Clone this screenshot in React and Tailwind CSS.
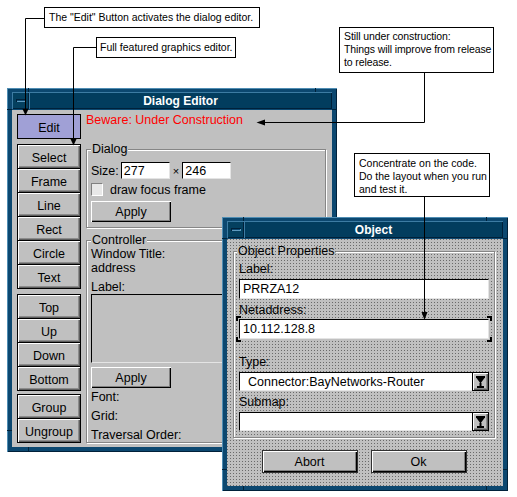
import React from "react";

const ui = "font-['Liberation_Sans',Arial,Helvetica,sans-serif]";
const raised =
  "bg-[#c0c0c0] shadow-[inset_1px_1px_0_#ffffff,inset_-1px_-1px_0_#5e5e5e,inset_-2px_-2px_0_#8c8c8c]";
const dotted =
  "bg-[#c0c0c0] bg-[image:linear-gradient(90deg,#c0c0c0_2px,transparent_2px),linear-gradient(#c0c0c0_2px,#6a6a6a_2px)] bg-[length:3px_3px] bg-fixed";
const groove = "border border-[#868686] shadow-[inset_1px_1px_0_#ffffff,1px_1px_0_#ffffff]";

function Notches() {
  // little resize-handle marks cut into the window frame
  return (
    <>
      <div className="absolute left-[21px] top-0 w-px h-[4px] bg-[#00223a]" />
      <div className="absolute right-[21px] top-0 w-px h-[4px] bg-[#00223a]" />
      <div className="absolute left-[21px] bottom-0 w-px h-[5px] bg-[#00223a]" />
      <div className="absolute right-[21px] bottom-0 w-px h-[5px] bg-[#00223a]" />
      <div className="absolute left-0 top-[21px] w-[5px] h-px bg-[#00223a]" />
      <div className="absolute right-0 top-[21px] w-[5px] h-px bg-[#00223a]" />
      <div className="absolute left-0 bottom-[21px] w-[5px] h-px bg-[#00223a]" />
      <div className="absolute right-0 bottom-[21px] w-[5px] h-px bg-[#00223a]" />
    </>
  );
}

function WindowFrame({ title, className, children }) {
  return (
    <div
      className={`absolute flex flex-col bg-[#0c4870] px-[5px] pt-[4px] pb-[5px] shadow-[inset_1px_1px_0_#4f8db3,inset_-1px_-1px_0_#00213a] ${className}`}
    >
      <Notches />
      <div className="flex h-[17px] shrink-0 mb-px">
        <div className="w-[17px] flex items-center justify-center bg-[#04405f] shadow-[inset_1px_1px_0_#3d7ca3,inset_-1px_-1px_0_#00213a]">
          <div className="w-[10px] h-[3px] bg-[#0c4870] shadow-[inset_1px_1px_0_#00213a,inset_-1px_-1px_0_#5f9bc0]" />
        </div>
        <div className="flex-1 flex items-center justify-center bg-[#023d5e] shadow-[inset_1px_1px_0_#3d7ca3,inset_-1px_-1px_0_#00213a] text-white font-bold text-[12px]">
          {title}
        </div>
      </div>
      {children}
    </div>
  );
}

function ToolGroup({ items, className }) {
  return (
    <div className={`flex flex-col gap-px bg-black border border-black ${className}`}>
      {items.map((item) => (
        <div key={item} className={`h-[23px] pt-[2px] flex items-center justify-center ${raised}`}>
          {item}
        </div>
      ))}
    </div>
  );
}

function PushButton({ label, className }) {
  return (
    <div
      className={`flex items-center justify-center pt-px bg-[#c0c0c0] shadow-[inset_1px_1px_0_#ffffff,inset_-1px_-1px_0_#000000,inset_-2px_-2px_0_#808080] ${className}`}
    >
      {label}
    </div>
  );
}

function Field({ value, className }) {
  return (
    <div
      className={`bg-white border border-black border-r-[#e4e4e4] border-b-[#e4e4e4] flex items-center ${className}`}
    >
      {value}
    </div>
  );
}

function ComboArrow() {
  return (
    <svg width="9" height="12" viewBox="0 0 9 12">
      <rect x="0" y="0" width="9" height="2" fill="#000" />
      <polygon points="0.5,2 8.5,2 4.5,7.5" fill="#000" />
      <rect x="3.5" y="7" width="2" height="3" fill="#000" />
      <rect x="1" y="10" width="7" height="2" fill="#000" />
    </svg>
  );
}

function Combo({ value }) {
  return (
    <div className="flex h-[19px] mt-[3px]">
      <div className="flex-1 bg-white border border-black border-r-0 border-b-[#e4e4e4] flex items-center pl-[8px]">
        {value}
      </div>
      <div className={`w-[17px] flex items-center justify-center border border-black ${raised}`}>
        <ComboArrow />
      </div>
    </div>
  );
}

function DialogEditor() {
  return (
    <WindowFrame title="Dialog Editor" className="left-[7px] top-[88px] w-[330px] h-[364px]">
      <div className="flex-1 bg-[#c0c0c0] flex gap-[5px] pl-[5px] pt-[4px] text-[12.5px] leading-[14px] overflow-hidden">
        <div className="w-[64px] shrink-0 flex flex-col">
          <div className="h-[25px] pt-[2px] bg-[#a0a0d6] border border-black flex items-center justify-center">
            Edit
          </div>
          <ToolGroup className="mt-[5px]" items={["Select", "Frame", "Line", "Rect", "Circle", "Text"]} />
          <ToolGroup className="mt-[5px]" items={["Top", "Up", "Down", "Bottom"]} />
          <ToolGroup className="mt-[3px]" items={["Group", "Ungroup"]} />
        </div>

        <div className="w-[240px] flex flex-col">
          <div className="text-[#ff0000] -mt-px">Beware: Under Construction</div>

          <fieldset className={`mt-[15px] pl-[4px] pb-[5px] ${groove}`}>
            <legend className="px-px bg-[#c0c0c0]">Dialog</legend>
            <div className="flex items-center h-[17px] mt-[6px]">
              <span>Size:</span>
              <Field value="277" className="ml-[2px] w-[49px] h-[17px] pl-[2px]" />
              <span className="px-[3px] text-[11px]">×</span>
              <Field value="246" className="w-[49px] h-[17px] pl-[2px]" />
            </div>
            <div className="flex items-center h-[13px] mt-[4px]">
              <div className="w-[12px] h-[13px] bg-[#e8e8e8] border border-[#808080] border-r-white border-b-white" />
              <span className="ml-[7px]">draw focus frame</span>
            </div>
            <PushButton label="Apply" className="mt-[5px] w-[80px] h-[21px]" />
          </fieldset>

          <fieldset className={`mt-[5px] pl-[4px] pr-[5px] ${groove}`}>
            <legend className="px-px bg-[#c0c0c0]">Controller</legend>
            <div>Window Title:</div>
            <div>address</div>
            <div className="mt-[5px]">Label:</div>
            <div className="h-[69px] bg-[#c0c0c0] border border-black border-r-[#e4e4e4] border-b-[#e4e4e4]" />
            <PushButton label="Apply" className="mt-[4px] w-[80px] h-[21px]" />
            <div className="mt-[2px]">Font:</div>
            <div className="mt-[5px]">Grid:</div>
            <div className="mt-[5px]">Traversal Order:</div>
          </fieldset>
        </div>
      </div>
    </WindowFrame>
  );
}

function ObjectWindow() {
  return (
    <WindowFrame title="Object" className="left-[222px] top-[217px] w-[286px] h-[274px]">
      <div className={`flex-1 flex flex-col pl-[6px] pr-[8px] pt-[5px] text-[12.5px] leading-[14px] ${dotted}`}>
        <fieldset className={`px-[5px] pt-[4px] pb-[6px] ${groove}`}>
          <legend className={`-ml-[2px] px-px ${dotted}`}>Object Properties</legend>
          <div>Label:</div>
          <Field value="PRRZA12" className="mt-[3px] h-[20px] pl-[3px]" />
          <div className="mt-[4px]">Netaddress:</div>
          <div className="relative mt-[2px]">
            <Field value="10.112.128.8" className="h-[20px] pl-[3px]" />
            <span className="absolute -left-[3px] -top-[3px] w-[5px] h-[5px] border-l-2 border-t-2 border-black" />
            <span className="absolute -right-[3px] -top-[3px] w-[5px] h-[5px] border-r-2 border-t-2 border-black" />
            <span className="absolute -left-[3px] -bottom-[3px] w-[5px] h-[5px] border-l-2 border-b-2 border-black" />
            <span className="absolute -right-[3px] -bottom-[3px] w-[5px] h-[5px] border-r-2 border-b-2 border-black" />
          </div>
          <div className="mt-[16px]">Type:</div>
          <Combo value="Connector:BayNetworks-Router" />
          <div className="mt-[4px]">Submap:</div>
          <Combo value="" />
        </fieldset>
        <div className="flex justify-center gap-[13px] mt-[12px]">
          <PushButton label="Abort" className="w-[96px] h-[23px] border border-[#303030]" />
          <PushButton label="Ok" className="w-[96px] h-[23px] border border-[#303030]" />
        </div>
      </div>
    </WindowFrame>
  );
}

function Note({ className, children }) {
  return (
    <div className={`absolute bg-white border border-black text-[10.5px] leading-[13px] whitespace-nowrap ${className}`}>
      {children}
    </div>
  );
}

function Arrows() {
  return (
    <svg className="absolute inset-0 pointer-events-none" width="517" height="497">
      <g stroke="#000" strokeWidth="1" fill="none">
        <polyline points="44,18.5 25.5,18.5 25.5,110" />
        <polyline points="96,47.5 73.5,47.5 73.5,140" />
        <polyline points="424.5,73 424.5,122.5 263,122.5" />
        <polyline points="424.5,197 424.5,313" />
      </g>
      <g fill="#000">
        <polygon points="22.5,109 28.5,109 25.5,115.5" />
        <polygon points="70.5,139 76.5,139 73.5,145.5" />
        <polygon points="256.5,122.5 265,119.5 265,125.5" />
        <polygon points="421.5,312 427.5,312 424.5,320" />
      </g>
    </svg>
  );
}

export default function App() {
  return (
    <div className={`relative w-[517px] h-[497px] bg-white overflow-hidden text-black ${ui}`}>
      <DialogEditor />
      <ObjectWindow />

      <Note className="left-[44px] top-[7px] w-[216px] h-[21px] pl-[4px] flex items-center">
        The "Edit" Button activates the dialog editor.
      </Note>
      <Note className="left-[96px] top-[37px] w-[140px] h-[21px] pl-[3px] flex items-center">
        Full featured graphics editor.
      </Note>
      <Note className="left-[339px] top-[27px] w-[155px] h-[46px] pl-[4px] pt-[2px] tracking-[-0.1px]">
        Still under construction:
        <br />
        Things will improve from release
        <br />
        to release.
      </Note>
      <Note className="left-[354px] top-[153px] w-[136px] h-[44px] pl-[4px] pt-[3px]">
        Concentrate on the code.
        <br />
        Do the layout when you run
        <br />
        and test it.
      </Note>

      <Arrows />
    </div>
  );
}
